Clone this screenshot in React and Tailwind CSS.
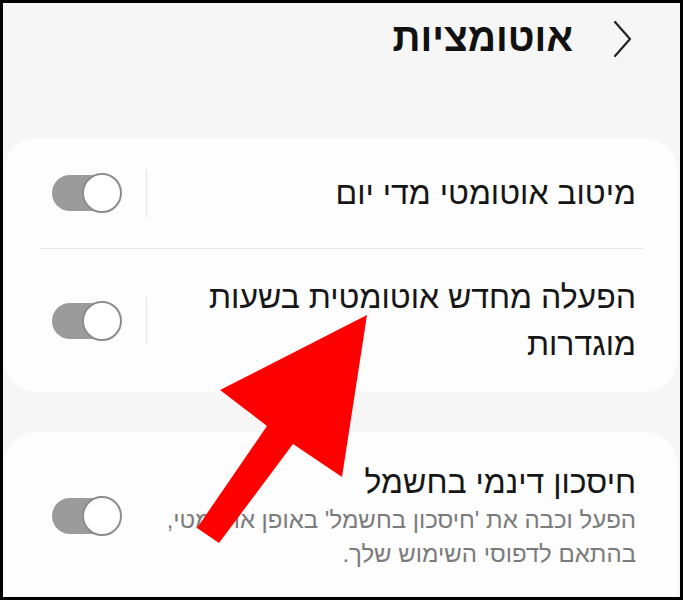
const font = { fontFamily: '"Liberation Sans", "DejaVu Sans", sans-serif' };

const Toggle = () => (
  <div className="relative w-[70px] h-[42px] shrink-0">
    <div className="absolute left-0 top-[3px] w-[60px] h-[36px] rounded-full bg-[#9b9b9b]" />
    <div className="absolute right-0 top-[1px] w-[40px] h-[40px] rounded-full bg-white border-2 border-[#8c8c8c]" />
  </div>
);

const Row = ({ lines, height }) => (
  <div className={`flex items-center pr-[41px] pl-[48px] ${height}`}>
    <div className="flex-1 text-right text-[32px] leading-[47px] text-[#161616]">
      {lines.map((l) => (
        <div key={l} className="whitespace-nowrap">{l}</div>
      ))}
    </div>
    <div className="w-px h-[47px] bg-[#e4e4e4] ml-[24px]" />
    <Toggle />
  </div>
);

export default function App() {
  return (
    <div className="relative w-[683px] h-[600px] bg-black p-[3px]" style={font}>
      <div dir="rtl" className="h-full bg-[#f6f6f6] overflow-hidden">
        <div className="flex items-center h-[71px] pr-[48px] gap-[40px]">
          <svg width="19" height="38" viewBox="0 0 19 38" className="shrink-0">
            <polyline points="2,2 17,19 2,36" fill="none" stroke="#222" strokeWidth="2.2" strokeLinecap="round" strokeLinejoin="round" />
          </svg>
          <h1 className="text-[39px] font-bold text-[#111]">אוטומציות</h1>
        </div>

        <div className="mt-[64px] ml-[1px] mr-[3px] rounded-[32px] bg-[#fdfdfd]">
          <Row lines={['מיטוב אוטומטי מדי יום']} height="h-[110px]" />
          <div className="h-px bg-[#e8e8e8] mr-[33px] ml-[36px]" />
          <Row lines={['הפעלה מחדש אוטומטית בשעות', 'מוגדרות']} height="h-[143px]" />
        </div>

        <div className="mt-[40px] ml-[1px] mr-[3px] rounded-[32px] bg-[#fdfdfd] h-[220px] pt-[29px] pr-[41px] pl-[48px]">
          <div className="flex items-center">
            <div className="flex-1 text-right">
              <div className="text-[32px] leading-[42px] text-[#161616] whitespace-nowrap">חיסכון דינמי בחשמל</div>
              <div className="text-[24px] leading-[34px] text-[#7b7b7b] whitespace-nowrap">הפעל וכבה את 'חיסכון בחשמל' באופן אוטומטי,</div>
              <div className="text-[24px] leading-[34px] text-[#7b7b7b] whitespace-nowrap">בהתאם לדפוסי השימוש שלך.</div>
            </div>
            <Toggle />
          </div>
        </div>
      </div>

      <svg className="absolute left-0 top-0 pointer-events-none" width="683" height="600" viewBox="0 0 683 600">
        <polygon points="367,315 220,390 267,426 197,528 219,543 293,444 342,477" fill="#ff0000" />
      </svg>
    </div>
  );
}
